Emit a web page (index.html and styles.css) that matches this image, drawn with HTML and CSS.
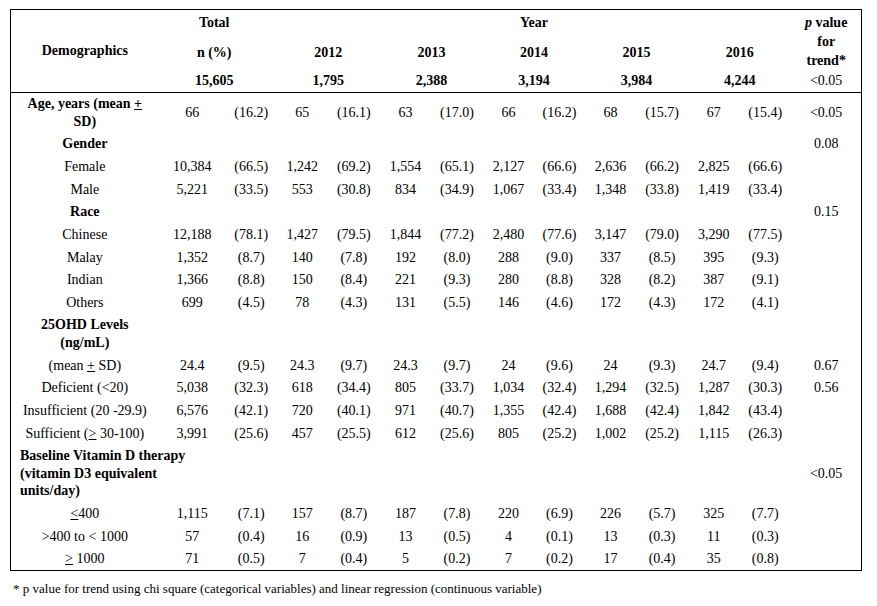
FILE: index.html
```html
<!DOCTYPE html>
<html lang="en">
<head>
<meta charset="utf-8">
<title>Demographics by year</title>
<link rel="stylesheet" href="styles.css">
</head>
<body>
<table class="tbl">
  <colgroup>
    <col class="c-label"><col class="c-tn"><col class="c-51">
    <col class="c-51"><col class="c-52">
    <col class="c-51"><col class="c-52">
    <col class="c-51"><col class="c-51">
    <col class="c-51"><col class="c-52">
    <col class="c-51"><col class="c-52">
    <col class="c-p">
  </colgroup>
  <thead>
    <tr class="h1">
      <th rowspan="3">Demographics</th>
      <th colspan="2" class="tot">Total</th>
      <th colspan="10">Year</th>
      <th rowspan="2" class="pv"><i>p</i> value<br>for<br>trend*</th>
    </tr>
    <tr class="h2">
      <th colspan="2" class="tot">n (%)</th>
      <th colspan="2">2012</th>
      <th colspan="2">2013</th>
      <th colspan="2">2014</th>
      <th colspan="2">2015</th>
      <th colspan="2">2016</th>
    </tr>
    <tr class="h3">
      <th colspan="2" class="tot">15,605</th>
      <th colspan="2">1,795</th>
      <th colspan="2">2,388</th>
      <th colspan="2">3,194</th>
      <th colspan="2">3,984</th>
      <th colspan="2">4,244</th>
      <td>&lt;0.05</td>
    </tr>
  </thead>
  <tbody>
    <tr><th>Age, years (mean <span class="ul">+</span> SD)</th><td>66</td><td>(16.2)</td><td>65</td><td>(16.1)</td><td>63</td><td>(17.0)</td><td>66</td><td>(16.2)</td><td>68</td><td>(15.7)</td><td>67</td><td>(15.4)</td><td>&lt;0.05</td></tr>
    <tr><th>Gender</th><td></td><td></td><td></td><td></td><td></td><td></td><td></td><td></td><td></td><td></td><td></td><td></td><td>0.08</td></tr>
    <tr><td>Female</td><td>10,384</td><td>(66.5)</td><td>1,242</td><td>(69.2)</td><td>1,554</td><td>(65.1)</td><td>2,127</td><td>(66.6)</td><td>2,636</td><td>(66.2)</td><td>2,825</td><td>(66.6)</td><td></td></tr>
    <tr><td>Male</td><td>5,221</td><td>(33.5)</td><td>553</td><td>(30.8)</td><td>834</td><td>(34.9)</td><td>1,067</td><td>(33.4)</td><td>1,348</td><td>(33.8)</td><td>1,419</td><td>(33.4)</td><td></td></tr>
    <tr><th>Race</th><td></td><td></td><td></td><td></td><td></td><td></td><td></td><td></td><td></td><td></td><td></td><td></td><td>0.15</td></tr>
    <tr><td>Chinese</td><td>12,188</td><td>(78.1)</td><td>1,427</td><td>(79.5)</td><td>1,844</td><td>(77.2)</td><td>2,480</td><td>(77.6)</td><td>3,147</td><td>(79.0)</td><td>3,290</td><td>(77.5)</td><td></td></tr>
    <tr><td>Malay</td><td>1,352</td><td>(8.7)</td><td>140</td><td>(7.8)</td><td>192</td><td>(8.0)</td><td>288</td><td>(9.0)</td><td>337</td><td>(8.5)</td><td>395</td><td>(9.3)</td><td></td></tr>
    <tr><td>Indian</td><td>1,366</td><td>(8.8)</td><td>150</td><td>(8.4)</td><td>221</td><td>(9.3)</td><td>280</td><td>(8.8)</td><td>328</td><td>(8.2)</td><td>387</td><td>(9.1)</td><td></td></tr>
    <tr><td>Others</td><td>699</td><td>(4.5)</td><td>78</td><td>(4.3)</td><td>131</td><td>(5.5)</td><td>146</td><td>(4.6)</td><td>172</td><td>(4.3)</td><td>172</td><td>(4.1)</td><td></td></tr>
    <tr><th>25OHD Levels (ng/mL)</th><td></td><td></td><td></td><td></td><td></td><td></td><td></td><td></td><td></td><td></td><td></td><td></td><td></td></tr>
    <tr><td>(mean <span class="ul">+</span> SD)</td><td>24.4</td><td>(9.5)</td><td>24.3</td><td>(9.7)</td><td>24.3</td><td>(9.7)</td><td>24</td><td>(9.6)</td><td>24</td><td>(9.3)</td><td>24.7</td><td>(9.4)</td><td>0.67</td></tr>
    <tr><td>Deficient (&lt;20)</td><td>5,038</td><td>(32.3)</td><td>618</td><td>(34.4)</td><td>805</td><td>(33.7)</td><td>1,034</td><td>(32.4)</td><td>1,294</td><td>(32.5)</td><td>1,287</td><td>(30.3)</td><td>0.56</td></tr>
    <tr><td>Insufficient (20 -29.9)</td><td>6,576</td><td>(42.1)</td><td>720</td><td>(40.1)</td><td>971</td><td>(40.7)</td><td>1,355</td><td>(42.4)</td><td>1,688</td><td>(42.4)</td><td>1,842</td><td>(43.4)</td><td></td></tr>
    <tr><td>Sufficient (<span class="ul">&gt;</span> 30-100)</td><td>3,991</td><td>(25.6)</td><td>457</td><td>(25.5)</td><td>612</td><td>(25.6)</td><td>805</td><td>(25.2)</td><td>1,002</td><td>(25.2)</td><td>1,115</td><td>(26.3)</td><td></td></tr>
    <tr><th colspan="2" class="left"><div class="wrap">Baseline Vitamin D therapy (vitamin D3 equivalent units/day)</div></th><td></td><td></td><td></td><td></td><td></td><td></td><td></td><td></td><td></td><td></td><td></td><td>&lt;0.05</td></tr>
    <tr><td><span class="ul">&lt;</span>400</td><td>1,115</td><td>(7.1)</td><td>157</td><td>(8.7)</td><td>187</td><td>(7.8)</td><td>220</td><td>(6.9)</td><td>226</td><td>(5.7)</td><td>325</td><td>(7.7)</td><td></td></tr>
    <tr><td>&gt;400 to &lt; 1000</td><td>57</td><td>(0.4)</td><td>16</td><td>(0.9)</td><td>13</td><td>(0.5)</td><td>4</td><td>(0.1)</td><td>13</td><td>(0.3)</td><td>11</td><td>(0.3)</td><td></td></tr>
    <tr><td><span class="ul">&gt;</span> 1000</td><td>71</td><td>(0.5)</td><td>7</td><td>(0.4)</td><td>5</td><td>(0.2)</td><td>7</td><td>(0.2)</td><td>17</td><td>(0.4)</td><td>35</td><td>(0.8)</td><td></td></tr>
  </tbody>
</table>
<p class="note">* p value for trend using chi square (categorical variables) and linear regression (continuous variable)</p>
</body>
</html>
```
FILE: styles.css
```css
body {
  margin: 0;
  background: #fff;
  color: #000;
  font-family: "Liberation Serif", "Times New Roman", serif;
  font-size: 14px;
}

.tbl {
  margin: 9px 0 0 10px;
  border-collapse: collapse;
  table-layout: fixed;
  width: 852px;
  border: 1px solid #000;
}

.c-label { width: 148px; }
.c-tn { width: 67px; }
.c-51 { width: 51px; }
.c-52 { width: 52px; }
.c-p { width: 70px; }

.tbl th,
.tbl td {
  padding: 2.58px 5px;
  line-height: 17.5px;
  text-align: center;
  vertical-align: middle;
  font-weight: normal;
}

.tbl th { font-weight: bold; }

.tbl thead th,
.tbl thead td { padding: 0 2px; }

.h1 { height: 25px; }
.h2 { height: 33px; }
.h3 { height: 22px; border-bottom: 1px solid #000; }

.tbl thead .tot { padding-right: 9px; }

.tbl thead .pv {
  vertical-align: top;
  padding-top: 3px;
  line-height: 19px;
}

.tbl .left {
  text-align: left;
  padding-left: 9px;
}

.wrap { width: 180px; }

.ul { text-decoration: underline; }

.note {
  margin: 10px 0 0 13px;
  font-size: 13px;
  line-height: 15px;
}
```
